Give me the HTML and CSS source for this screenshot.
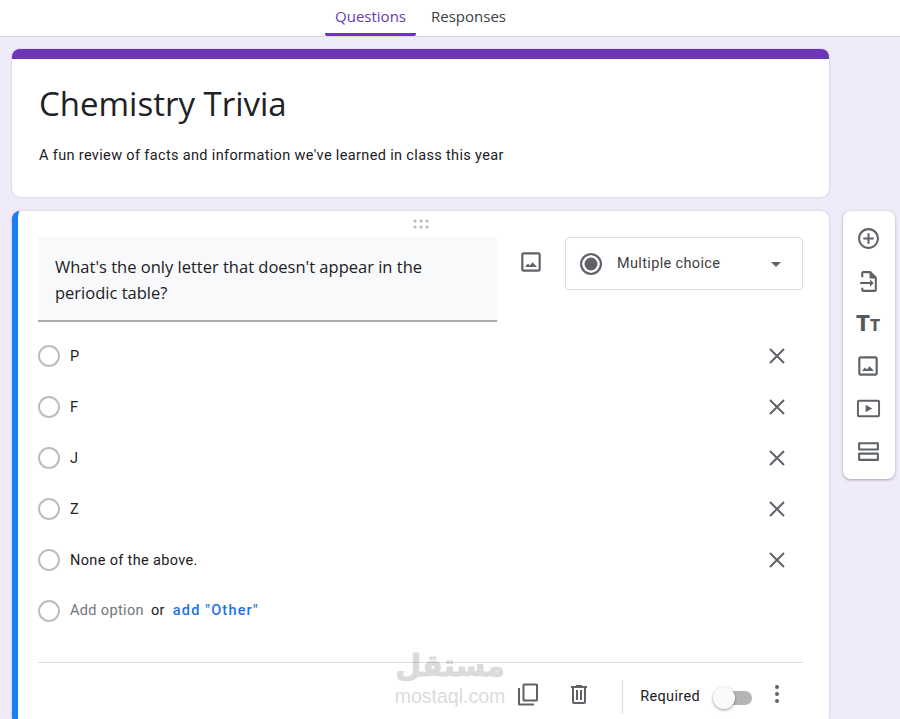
FILE: index.html
```html
<!DOCTYPE html>
<html lang="en">
<head>
  <meta charset="UTF-8">
  <meta name="viewport" content="width=device-width, initial-scale=1.0">
  <title>Chemistry Trivia</title>
  <link rel="stylesheet" href="styles.css">
</head>
<body>
  <header class="tabs">
    <a class="tab active">Questions</a>
    <a class="tab">Responses</a>
  </header>

  <div class="page">
    <main class="forms">
      <section class="card title-card">
        <h1>Chemistry Trivia</h1>
        <p>A fun review of facts and information we've learned in class this year</p>
      </section>

      <section class="card question-card">
        <div class="drag">
          <svg width="18" height="10" viewBox="0 0 18 10"><g fill="#b4b6ba"><circle cx="3" cy="2" r="1.5"/><circle cx="9" cy="2" r="1.5"/><circle cx="15" cy="2" r="1.5"/><circle cx="3" cy="8" r="1.5"/><circle cx="9" cy="8" r="1.5"/><circle cx="15" cy="8" r="1.5"/></g></svg>
        </div>

        <div class="question-head">
          <div class="question-field">What's the only letter that doesn't appear in the periodic table?</div>
          <svg class="icon image-icon head-image" viewBox="0 0 24 24"><path d="M19 5v14H5V5h14m0-2H5c-1.100 0-2 .9-2 2v14c0 1.100.9 2 2 2h14c1.100 0 2-.9 2-2V5c0-1.100-.9-2-2-2z"/><path d="M6.500 16.500l2.700-3.200 1.800 1.900 2.400-3 4.100 4.300z"/></svg>
          <div class="type-select">
            <span class="type-radio"></span>
            <span class="type-label">Multiple choice</span>
            <span class="caret"></span>
          </div>
        </div>

        <ul class="options">
          <li class="option"><span class="radio"></span><span class="option-text">P</span>
            <svg class="close" viewBox="0 0 16 16"><path d="M1 1l14 14M15 1L1 15"/></svg></li>
          <li class="option"><span class="radio"></span><span class="option-text">F</span>
            <svg class="close" viewBox="0 0 16 16"><path d="M1 1l14 14M15 1L1 15"/></svg></li>
          <li class="option"><span class="radio"></span><span class="option-text">J</span>
            <svg class="close" viewBox="0 0 16 16"><path d="M1 1l14 14M15 1L1 15"/></svg></li>
          <li class="option"><span class="radio"></span><span class="option-text">Z</span>
            <svg class="close" viewBox="0 0 16 16"><path d="M1 1l14 14M15 1L1 15"/></svg></li>
          <li class="option"><span class="radio"></span><span class="option-text">None of the above.</span>
            <svg class="close" viewBox="0 0 16 16"><path d="M1 1l14 14M15 1L1 15"/></svg></li>
          <li class="option"><span class="radio"></span>
            <span class="option-text add-text">Add option</span>
            <span class="or-text">or</span>
            <span class="other-text">add "Other"</span></li>
        </ul>

        <div class="card-footer">
          <svg class="icon" viewBox="0 0 24 24"><path d="M8 1.500h12.500a1.500 1.500 0 0 1 1.500 1.500v15a1.500 1.500 0 0 1-1.500 1.500H8A1.500 1.500 0 0 1 6.500 18V3A1.500 1.500 0 0 1 8 1.500zm.5 2v14h11.500v-14z"/><path d="M2 6h2v15.500h14v2H3.500A1.500 1.500 0 0 1 2 22z"/></svg>
          <svg class="icon trash" viewBox="0 0 24 24"><path d="M15 4V3H9v1H4v2h1v14c0 1.100.9 2 2 2h10c1.100 0 2-.9 2-2V6h1V4h-5zm2 16H7V6h10v14z"/><path d="M9 8h2v10H9zM13 8h2v10h-2z"/></svg>
          <span class="footer-sep"></span>
          <span class="required">Required</span>
          <span class="toggle"><span class="thumb"></span></span>
          <svg class="dots" width="6" height="20" viewBox="0 0 6 20"><g fill="#5f6368"><circle cx="3" cy="3" r="2"/><circle cx="3" cy="10" r="2"/><circle cx="3" cy="17" r="2"/></g></svg>
        </div>
      </section>
    </main>

    <aside class="toolbar">
      <svg class="icon tool-icon" viewBox="0 0 24 24"><path d="M13 7h-2v4H7v2h4v4h2v-4h4v-2h-4V7zm-1-5C6.480 2 2 6.480 2 12s4.480 10 10 10 10-4.480 10-10S17.520 2 12 2zm0 18c-4.410 0-8-3.590-8-8s3.590-8 8-8 8 3.590 8 8-3.590 8-8 8z"/></svg>
      <svg class="icon tool-icon" viewBox="0 0 24 24"><path d="M14 2H7C5.900 2 5 2.900 5 4v4h2V4h6v5h5v11H7v-2H5v2c0 1.100.9 2 2 2h11c1.100 0 2-.9 2-2V8z"/><path d="M4 12.500h9.500V10l3.500 3.500-3.500 3.500v-2.500H4z"/></svg>
      <span class="text-tool"><span class="big-t">T</span><span class="small-t">T</span></span>
      <svg class="icon image-icon" viewBox="0 0 24 24"><path d="M19 5v14H5V5h14m0-2H5c-1.100 0-2 .9-2 2v14c0 1.100.9 2 2 2h14c1.100 0 2-.9 2-2V5c0-1.100-.9-2-2-2z"/><path d="M6.500 16.500l2.700-3.200 1.800 1.900 2.400-3 4.100 4.300z"/></svg>
      <svg class="icon tool-icon" viewBox="-1 -1 26 26"><path d="M2 3h20a2 2 0 0 1 2 2v14a2 2 0 0 1-2 2H2a2 2 0 0 1-2-2V5a2 2 0 0 1 2-2zm0 2v14h20V5z"/><path d="M9 8v8l7-4z"/></svg>
      <svg class="icon tool-icon" viewBox="0 0 24 24"><path d="M3 3h18a1 1 0 0 1 1 1v6a1 1 0 0 1-1 1H3a1 1 0 0 1-1-1V4a1 1 0 0 1 1-1zm1 2v4h16V5zM3 13h18a1 1 0 0 1 1 1v6a1 1 0 0 1-1 1H3a1 1 0 0 1-1-1v-6a1 1 0 0 1 1-1zm1 2v4h16v-4z"/></svg>
    </aside>
  </div>

  <div class="watermark">
    <span class="wm-arabic" lang="ar" dir="rtl">مستقل</span>
    <span class="wm-latin">mostaql.com</span>
  </div>
</body>
</html>
```

FILE: styles.css
```css
html, body {
  height: 100%;
  overflow: hidden;
}

body {
  margin: 0;
  background-color: #f0ebf8;
  font-family: Roboto, Arial, sans-serif;
  color: #202124;
}

.tabs {
  display: flex;
  justify-content: center;
  gap: 5px;
  height: 36px;
  padding-right: 59px;
  background-color: #fff;
  border-bottom: 1px solid #dcd8e4;
}

.tab {
  box-sizing: border-box;
  height: 36px;
  padding: 6px 10px 0;
  font-family: "Open Sans", Roboto, sans-serif;
  font-size: 15px;
  font-weight: 500;
  color: #3c4043;
}

.tab.active {
  color: #673ab7;
  border-bottom: 3px solid #6c36b8;
  border-radius: 0 0 2px 2px;
}

.page {
  display: flex;
  align-items: flex-start;
  gap: 14px;
  padding: 12px 5px 0 12px;
}

.forms {
  display: flex;
  flex-direction: column;
  gap: 14px;
  width: 817px;
  flex-shrink: 0;
}

.card {
  box-sizing: border-box;
  background-color: #fff;
  border-radius: 8px;
  box-shadow: 0 0 2px rgba(60, 40, 100, 0.3);
}

.title-card {
  height: 148px;
  padding: 24px 27px 0;
  border-top: 10px solid #6c36b8;
}

.title-card h1 {
  margin: 0;
  font-family: "Open Sans", Roboto, sans-serif;
  font-size: 33px;
  font-weight: 400;
  line-height: 42px;
}

.title-card p {
  margin: 21px 0 0;
  font-size: 14.5px;
  letter-spacing: 0.35px;
  line-height: 20px;
  color: #202124;
}

.question-card {
  padding: 0 26px 0 20px;
  border-left: 6px solid #1a7ff0;
}

.drag {
  display: flex;
  justify-content: center;
  align-items: center;
  height: 26px;
}

.question-head {
  display: flex;
  align-items: flex-start;
}

.question-field {
  box-sizing: border-box;
  width: 459px;
  height: 85px;
  padding: 17px 60px 0 17px;
  background-color: #f8f9fa;
  border-bottom: 2px solid #a8abaf;
  font-family: "Open Sans", Roboto, sans-serif;
  font-size: 16.5px;
  line-height: 26px;
}

.icon {
  width: 24px;
  height: 24px;
  fill: #5f6368;
  flex-shrink: 0;
}

.tool-icon {
  width: 25px;
  height: 25px;
}

.image-icon {
  width: 26px;
  height: 26px;
}

.head-image {
  margin: 12px 21px 0;
}

.type-select {
  box-sizing: border-box;
  display: flex;
  align-items: center;
  width: 238px;
  height: 53px;
  padding: 0 21px 0 14px;
  border: 1px solid #dadce0;
  border-radius: 4px;
}

.type-radio {
  box-sizing: border-box;
  width: 22px;
  height: 22px;
  border: 2px solid #5f6368;
  border-radius: 50%;
  background-color: #5f6368;
  box-shadow: inset 0 0 0 2.5px #fff;
}

.type-label {
  flex: 1;
  margin-left: 15px;
  font-size: 14.5px;
  letter-spacing: 0.35px;
  color: #3c4043;
}

.caret {
  width: 0;
  height: 0;
  margin-top: 1px;
  border-left: 5px solid transparent;
  border-right: 5px solid transparent;
  border-top: 5px solid #5f6368;
}

.options {
  margin: 8px 0 0;
  padding: 0;
  list-style: none;
}

.option {
  display: flex;
  align-items: center;
  height: 51px;
  font-size: 14.5px;
  letter-spacing: 0.35px;
}

.radio {
  box-sizing: border-box;
  width: 22px;
  height: 22px;
  margin-right: 10px;
  border: 2px solid #bdbdbd;
  border-radius: 50%;
}

.option-text {
  flex: 1;
  padding-top: 2px;
}

.close {
  width: 16px;
  height: 16px;
  margin-right: 18px;
  fill: none;
  stroke: #5f6368;
  stroke-width: 2;
}

.add-text {
  flex: none;
  padding-top: 0;
  color: #70757a;
}

.or-text {
  margin-left: 7px;
}

.other-text {
  margin-left: 8px;
  font-weight: 500;
  letter-spacing: 1.2px;
  color: #1a73e8;
}

.card-footer {
  display: flex;
  align-items: center;
  justify-content: flex-end;
  height: 62px;
  margin-top: 26px;
  border-top: 1px solid #dadce0;
}

.trash {
  margin-left: 27px;
}

.footer-sep {
  width: 1px;
  height: 34px;
  margin: 6px 17px 0 31px;
  background-color: #dadce0;
}

.required {
  margin-top: 4px;
  font-size: 14.5px;
  letter-spacing: 0.35px;
}

.toggle {
  position: relative;
  width: 30px;
  height: 14px;
  margin: 8px 0 0 22px;
  background-color: #b5b5b5;
  border-radius: 7px;
}

.thumb {
  position: absolute;
  left: -9px;
  top: -4px;
  width: 22px;
  height: 22px;
  background-color: #fafafa;
  border-radius: 50%;
  box-shadow: 0 1px 3px rgba(0, 0, 0, 0.4);
}

.dots {
  margin: 0 23px 0 22px;
}

.toolbar {
  box-sizing: border-box;
  display: flex;
  flex-direction: column;
  align-items: center;
  justify-content: space-between;
  width: 52px;
  height: 268px;
  margin-top: 162px;
  padding: 15px 2px 15px 0;
  background-color: #fff;
  border-radius: 8px;
  box-shadow: 0 1px 3px rgba(60, 50, 80, 0.4);
}

.text-tool {
  display: flex;
  align-items: baseline;
  justify-content: center;
  height: 24px;
  font-family: Roboto, sans-serif;
  font-weight: 900;
  line-height: 26px;
  color: #55595e;
}

.big-t {
  font-size: 22px;
}

.small-t {
  font-size: 16px;
}

.watermark {
  position: absolute;
  left: 395px;
  top: 648px;
  width: 110px;
  display: flex;
  flex-direction: column;
  align-items: center;
  color: #9a9a9a;
  opacity: 0.35;
  pointer-events: none;
}

.wm-arabic {
  font-family: "DejaVu Sans", sans-serif;
  font-size: 30px;
  font-weight: 700;
  line-height: 36px;
  -webkit-text-stroke: 1px #9a9a9a;
}

.wm-latin {
  font-family: "Liberation Sans", Arial, sans-serif;
  font-size: 19.5px;
  line-height: 24px;
}
```
